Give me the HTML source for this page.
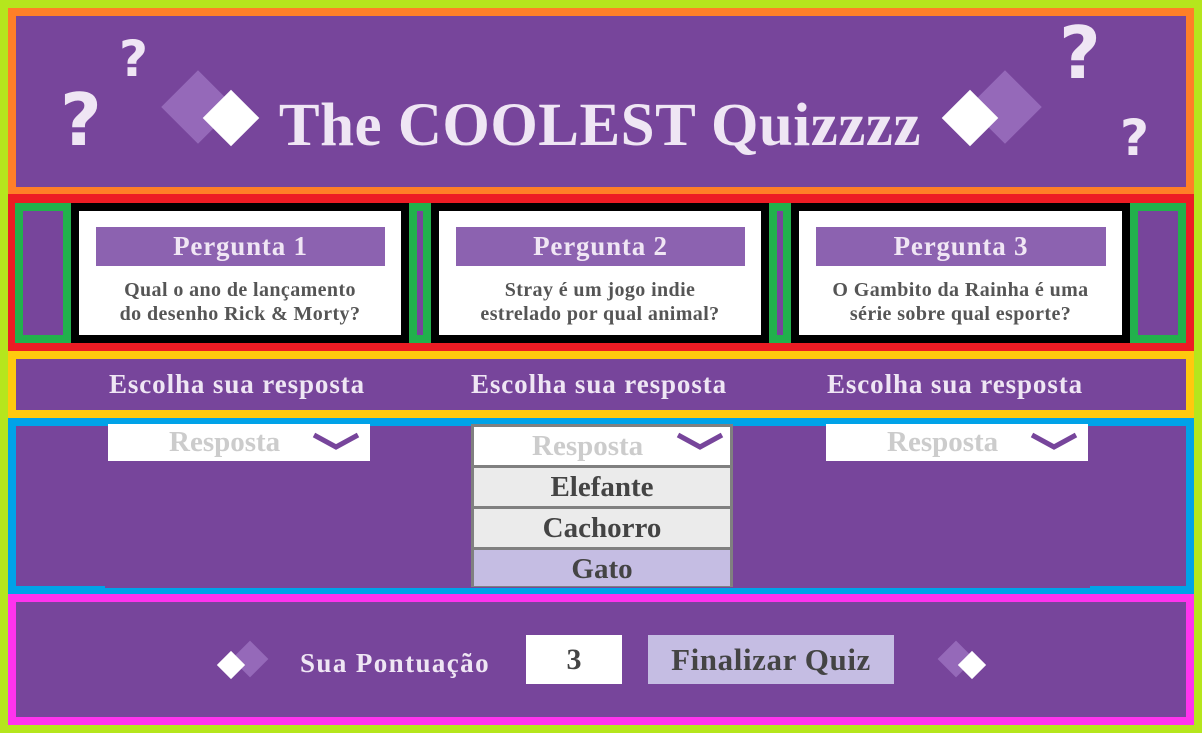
<!DOCTYPE html>
<html><head><meta charset="utf-8"><style>
*{margin:0;padding:0;box-sizing:border-box}
body{width:1202px;height:733px;background:#b5e61d;position:relative;overflow:hidden;font-family:"Liberation Serif",serif;font-weight:bold}
.a{position:absolute}
.pu{background:#77459b}
.dm{position:absolute;transform:rotate(45deg)}
.q{position:absolute;color:#efe6f4;font-family:"DejaVu Sans","Liberation Sans",sans-serif;font-weight:bold;line-height:1}
.card{position:absolute;background:#000;padding:8px}
.card .w{background:#fff;width:100%;height:100%;position:relative}
.tb{position:absolute;left:17px;right:16px;top:16px;height:39px;background:#8c62b0;color:#f0e6f4;font-size:27px;letter-spacing:0.8px;text-align:center;line-height:39px}
.qt{position:absolute;left:0;right:0;top:67px;text-align:center;color:#555;font-size:20px;letter-spacing:0.4px;line-height:24px}
.g{position:absolute;border:8px solid #22b14c;background:#77459b}
.esc{position:absolute;top:369px;color:#efe6f4;font-size:27px;letter-spacing:0.9px;width:360px;text-align:center}
.sel{position:absolute;background:#fff;height:37px;color:#ccc;font-size:29px;line-height:37px}
.opt{background:#ebebeb;color:#444;font-size:29px;text-align:center;line-height:38px;border-top:3px solid #808080;height:41px}
</style></head><body>
<div class="a" style="left:8px;top:8px;width:1186px;height:186px;background:#ff7f27"></div>
<div class="a pu" style="left:16px;top:16px;width:1170px;height:171px"></div>
<div class="q" style="left:60px;top:84px;font-size:72px">?</div>
<div class="q" style="left:119px;top:34px;font-size:50px">?</div>
<div class="q" style="left:1059px;top:17px;font-size:72px">?</div>
<div class="q" style="left:1120px;top:113px;font-size:50px">?</div>
<div class="dm" style="left:172px;top:81px;width:52px;height:52px;background:#9569b9"></div>
<div class="dm" style="left:211px;top:98px;width:40px;height:40px;background:#fff"></div>
<div class="dm" style="left:979px;top:81px;width:52px;height:52px;background:#9569b9"></div>
<div class="dm" style="left:950px;top:98px;width:40px;height:40px;background:#fff"></div>
<div class="a" style="left:250px;top:90px;width:700px;text-align:center;color:#efe6f4;font-size:61px;line-height:72px;letter-spacing:0.5px">The COOLEST Quizzzz</div>
<div class="a" style="left:8px;top:194px;width:1186px;height:157px;background:#ed1c24"></div>
<div class="g" style="left:15px;top:203px;width:56px;height:140px"></div>
<div class="g" style="left:409px;top:203px;width:22px;height:140px"></div>
<div class="g" style="left:769px;top:203px;width:22px;height:140px"></div>
<div class="g" style="left:1130px;top:203px;width:56px;height:140px"></div>
<div class="card" style="left:71px;top:203px;width:338px;height:140px"><div class="w"><div class="tb">Pergunta 1</div><div class="qt">Qual o ano de lançamento<br>do desenho Rick &amp; Morty?</div></div></div>
<div class="card" style="left:431px;top:203px;width:338px;height:140px"><div class="w"><div class="tb">Pergunta 2</div><div class="qt">Stray é um jogo indie<br>estrelado por qual animal?</div></div></div>
<div class="card" style="left:791px;top:203px;width:339px;height:140px"><div class="w"><div class="tb">Pergunta 3</div><div class="qt">O Gambito da Rainha é uma<br>série sobre qual esporte?</div></div></div>
<div class="a" style="left:8px;top:351px;width:1186px;height:67px;background:#ffc90e"></div>
<div class="a pu" style="left:16px;top:359px;width:1170px;height:51px"></div>
<div class="esc" style="left:57px">Escolha sua resposta</div>
<div class="esc" style="left:419px">Escolha sua resposta</div>
<div class="esc" style="left:775px">Escolha sua resposta</div>
<div class="a" style="left:8px;top:418px;width:1186px;height:176px;background:#00a2e8"></div>
<div class="a pu" style="left:16px;top:426px;width:1170px;height:160px"></div>
<div class="a pu" style="left:105px;top:580px;width:985px;height:8px"></div>
<div class="sel" style="left:108px;top:424px;width:262px"><span style="position:absolute;left:61px">Resposta</span><svg class="a" style="left:204px;top:8px" width="48" height="20"><path d="M2 3 L24 15 L46 3" stroke="#77459b" stroke-width="5" fill="none"/></svg></div>
<div class="a" style="left:471px;top:424px;width:262px;height:163px;background:#808080;padding:0 3px 3px 3px">
<div style="background:#fff;color:#ccc;font-size:29px;line-height:38px;position:relative;height:38px;margin-top:3px"><span style="position:absolute;left:58px">Resposta</span><svg class="a" style="left:202px;top:5px" width="48" height="20"><path d="M2 3 L24 15 L46 3" stroke="#77459b" stroke-width="5" fill="none"/></svg></div>
<div class="opt">Elefante</div><div class="opt">Cachorro</div><div class="opt" style="background:#c5bde3;height:39px">Gato</div></div>
<div class="sel" style="left:826px;top:424px;width:262px"><span style="position:absolute;left:61px">Resposta</span><svg class="a" style="left:204px;top:8px" width="48" height="20"><path d="M2 3 L24 15 L46 3" stroke="#77459b" stroke-width="5" fill="none"/></svg></div>
<div class="a" style="left:8px;top:594px;width:1186px;height:131px;background:#ff33ee"></div>
<div class="a pu" style="left:16px;top:602px;width:1170px;height:115px"></div>
<div class="dm" style="left:237px;top:646px;width:26px;height:26px;background:#9569b9"></div>
<div class="dm" style="left:221px;top:655px;width:20px;height:20px;background:#fff"></div>
<div class="a" style="left:300px;top:646px;color:#efe6f4;font-size:27px;letter-spacing:1.4px;line-height:34px">Sua Pontuação</div>
<div class="a" style="left:526px;top:635px;width:96px;height:49px;background:#fff;color:#444;font-size:30px;text-align:center;line-height:49px">3</div>
<div class="a" style="left:648px;top:635px;width:246px;height:49px;background:#c5bde3;color:#444;font-size:31px;letter-spacing:0.6px;text-align:center;line-height:49px">Finalizar Quiz</div>
<div class="dm" style="left:943px;top:646px;width:26px;height:26px;background:#9569b9"></div>
<div class="dm" style="left:962px;top:655px;width:20px;height:20px;background:#fff"></div>
</body></html>
